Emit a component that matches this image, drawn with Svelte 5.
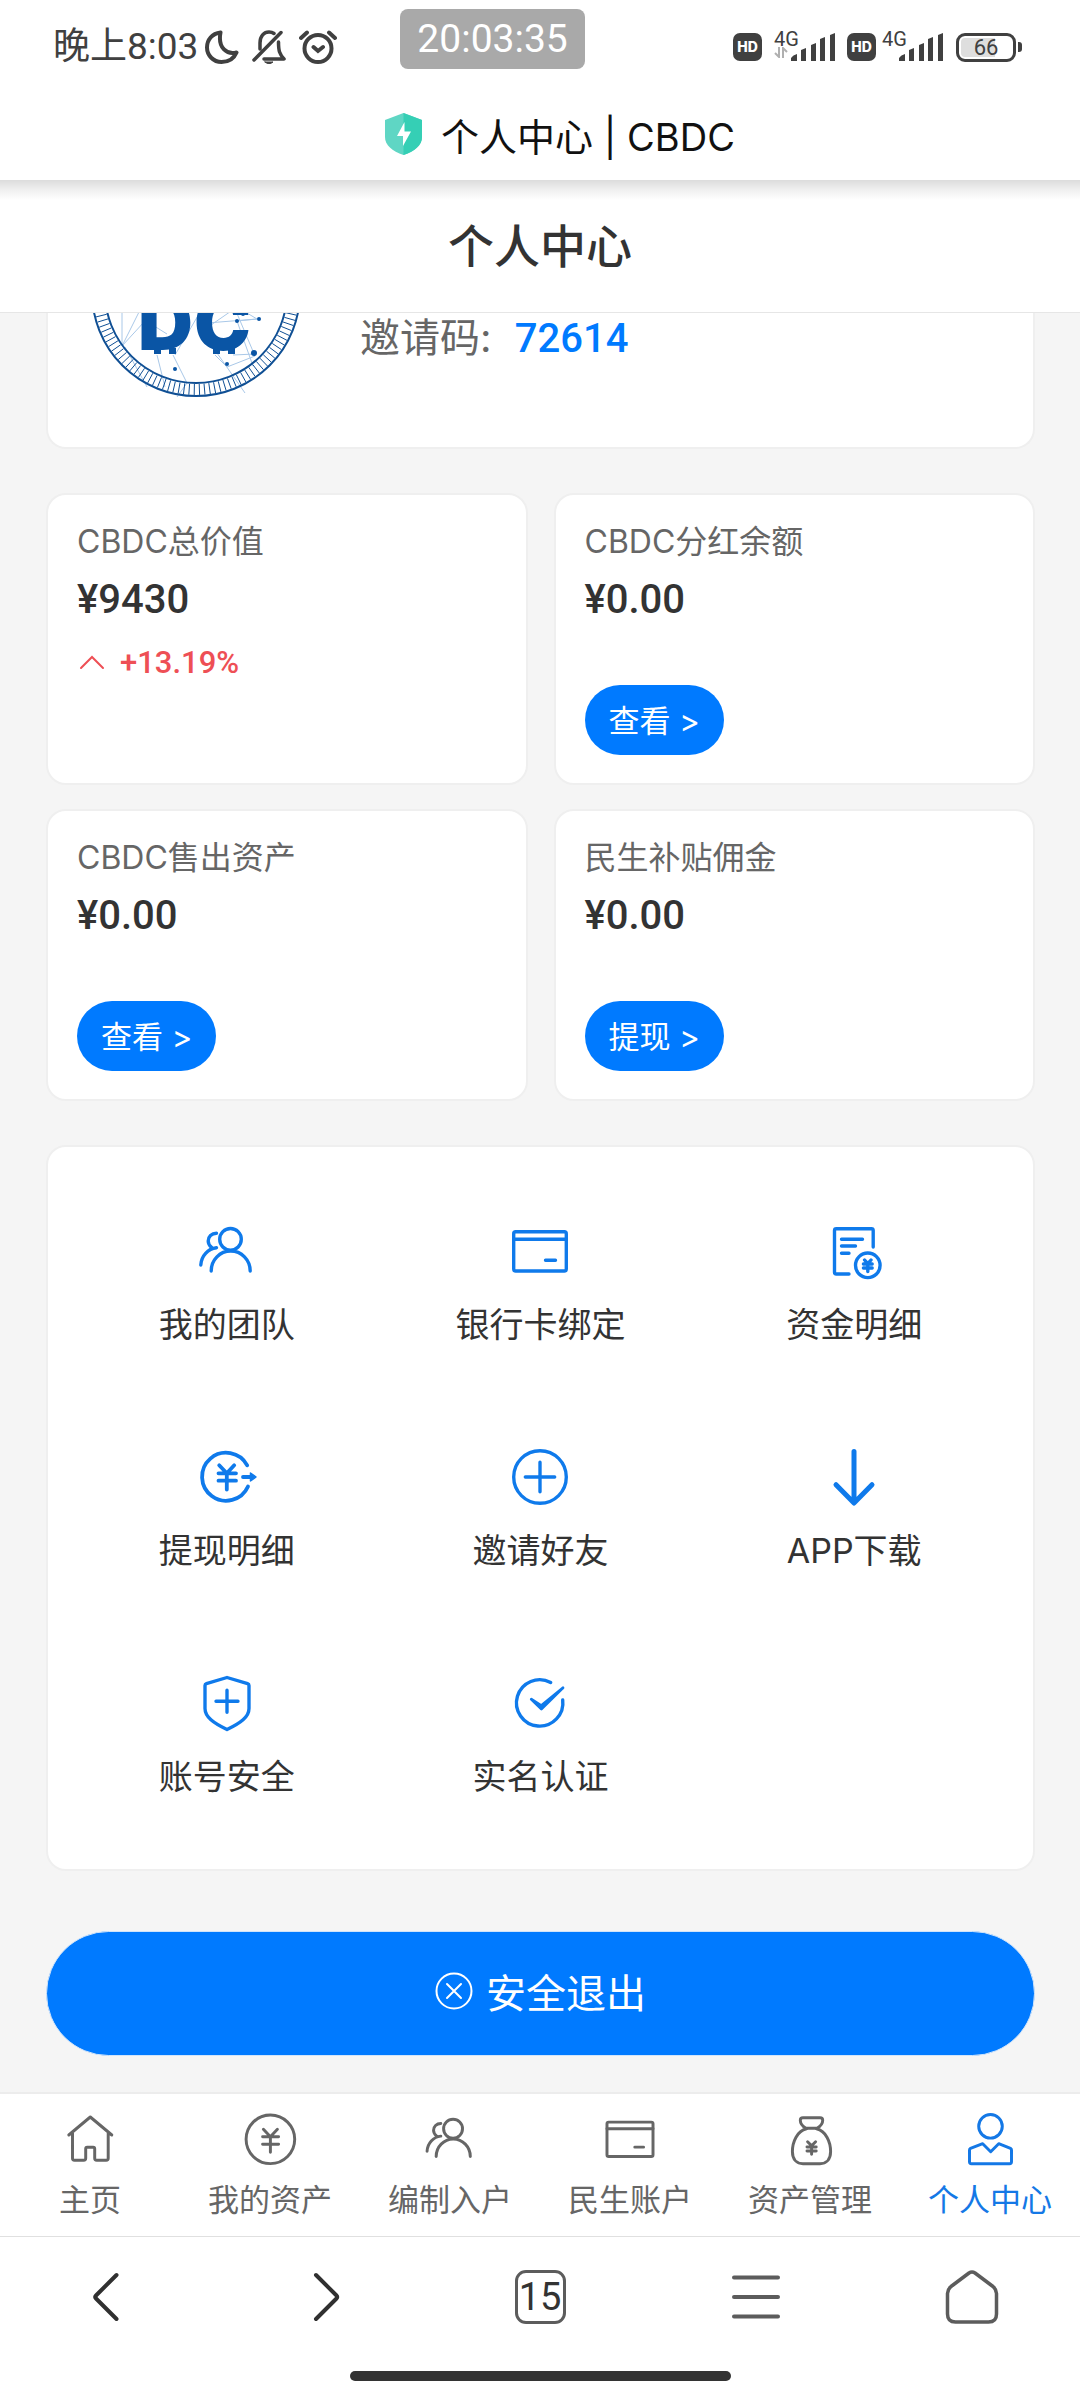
<script>
	const blue = '#0f7aeb';

	// every icon: viewBox size + inner markup, stroke comes from the parent svg
	const icons = {
		team: {
			box: 64,
			body: `<circle cx="35.5" cy="20.3" r="10.8"/><path d="M16.2 52a19.5 20 0 0 1 39 0M21.5 14.3c-5 0-8.3 3.5-8.3 7.7 0 3 1.2 4.6 3.3 6.4M21.5 28.7C13 29.5 6.2 37 5.8 46"/>`
		},
		card: {
			box: 64,
			body: `<rect x="5.7" y="12.7" width="52.6" height="39.3" rx="2"/><path d="M5.7 20.3h52.6M37.5 41.3h10"/>`
		},
		bill: {
			box: 64,
			body: `<path d="M51.2 28V11.5q0-1.8-1.8-1.8H14.3q-1.8 0-1.8 1.8v41.7q0 1.8 1.8 1.8H27M19.5 20.3h21M19.5 27h14M19.5 34.3h7.5"/><circle cx="45.8" cy="46.3" r="12.3"/><path d="M42.6 41l3.2 3.6 3.2-3.6M41.4 45h8.8M41.4 49h8.8M45.8 44.6v8"/>`
		},
		withdraw: {
			box: 64,
			body: `<g stroke-width="3.8"><path d="M52.2 20.3a24 24 0 1 0 .8 21.2M24.2 20.3l7.6 8 7.4-8M23.5 28.3h17.5M23.5 35.7h17.5M31.8 28.3v16.2M48 32h8"/></g><path d="M55.5 28v8l5.5-4z" fill="currentColor" stroke-width="1.5"/>`
		},
		plus: {
			box: 64,
			body: `<circle cx="32" cy="32" r="26.3"/><path d="M17.3 32h29.4M32 17.3v29.4"/>`
		},
		down: {
			box: 64,
			body: `<path d="M32 6.5v51M14 39.7L32 58l18-18.3" stroke-width="5"/>`
		},
		shield: {
			box: 64,
			body: `<path d="M32 6.5l20.6 6.2q1.4.4 1.4 1.8v23c0 8.5-8.5 14.5-22 21-13.5-6.5-22-12.5-22-21v-23q0-1.4 1.4-1.8zM21 30.300h22M32 19.300v22"/>`
		},
		check: {
			box: 64,
			body: `<path d="M42.7 11.5a23.2 23.2 0 1 0 12 17.5"/><path d="M23.3 28.2l10 6.4L55 16.8 33.4 38z" fill="currentColor" stroke-width="2.8"/>`
		},
		home: {
			box: 56,
			body: `<path d="M6.8 24L28.3 6l21.5 18M10.5 22v25.3q0 2 2 2h9.2q2 0 2-2v-9.5q0-1.5 1.5-1.5h6q1.5 0 1.5 1.5v9.5q0 2 2 2h9.5q2 0 2-2V22"/>`
		},
		yen: {
			box: 56,
			body: `<circle cx="28.4" cy="28.3" r="24.3"/><path d="M21.4 18.3l7 7.4 7-7.4M20.6 25.7h16M20.6 33.3h16M28.4 25.7v15.6"/>`
		},
		bag: {
			box: 56,
			body: `<path d="M24 17.3c-3.5-2-5.7-5-5.7-8q0-2.6 2.6-2.6h17.2q2.6 0 2.6 2.6c0 3-2.2 6-5.7 8z"/><path d="M24.500 17.8C15 20 10.4 31 10.4 40.5c0 8 4.4 12.2 10.6 12.2h17c6.2 0 10.6-4.2 10.6-12.2C48.6 31 44 20 34.5 17.8"/><path d="M25.6 30.8l4 4 4-4M25 36h9.2M25 40h9.2M29.6 35v8.3"/>`
		},
		user: {
			box: 56,
			body: `<circle cx="28.5" cy="15.3" r="11.8"/><path d="M20.7 32.7l8 8 8-8 11.8 4.7q1 .5 1 1.6v11.7q0 2-2 2h-38q-2 0-2-2V39q0-1.1 1-1.6z"/>`
		}
	};

	const assets = [
		{ name: 'CBDC总价值', value: '¥9430', rise: '+13.19%' },
		{ name: 'CBDC分红余额', value: '¥0.00', action: '查看 >' },
		{ name: 'CBDC售出资产', value: '¥0.00', action: '查看 >' },
		{ name: '民生补贴佣金', value: '¥0.00', action: '提现 >' }
	];

	const menu = [
		{ icon: 'team', text: '我的团队' },
		{ icon: 'card', text: '银行卡绑定' },
		{ icon: 'bill', text: '资金明细' },
		{ icon: 'withdraw', text: '提现明细' },
		{ icon: 'plus', text: '邀请好友' },
		{ icon: 'down', text: 'APP下载' },
		{ icon: 'shield', text: '账号安全' },
		{ icon: 'check', text: '实名认证' }
	];

	const tabs = [
		{ icon: 'home', text: '主页' },
		{ icon: 'yen', text: '我的资产' },
		{ icon: 'team', text: '编制入户' },
		{ icon: 'card', text: '民生账户' },
		{ icon: 'bag', text: '资产管理' },
		{ icon: 'user', text: '个人中心' }
	];

	let current = $state('user');

	// short spokes between the two rings of the coin
	const spokes = [];
	for (let a = -8; a <= 188; a += 3) {
		const r = (a * Math.PI) / 180;
		spokes.push(`M${105 + 92 * Math.cos(r)} ${105 + 92 * Math.sin(r)}L${105 + 103 * Math.cos(r)} ${105 + 103 * Math.sin(r)}`);
	}
</script>

{#snippet icon(name, size)}
	<svg
		width={size}
		height={size}
		viewBox="0 0 {icons[name].box} {icons[name].box}"
		fill="none"
		stroke="currentColor"
		stroke-width={icons[name].box / 19}
		stroke-linecap="round"
		stroke-linejoin="round"
		aria-hidden="true"
	>
		{@html icons[name].body}
	</svg>
{/snippet}

{#snippet signal()}
	<svg width="44" height="28" viewBox="0 0 44 28" fill="#404040" aria-hidden="true">
		<path d="M0 28v-3q2-3 6-4v7zM10 28V17l5-2v13zM20 28V12l5-2v18zM29 28V6l5-2v24zM39 28V2l5-2v28z" />
	</svg>
{/snippet}

<div class="page">
	<div class="status">
		<div class="status-left">
			<span class="clock">晚上8:03</span>
			<svg width="34" height="34" viewBox="0 0 34 34" fill="none" stroke="#404040" stroke-width="4" stroke-linejoin="round" aria-hidden="true">
				<path d="M15.5 2.5C7 3.5 2 10 2 17.5 2 25.5 8.5 32 16.5 32c7 0 12.5-3.5 15-9.5-9 2.5-19-4-16-20z" />
			</svg>
			<svg width="34" height="34" viewBox="0 0 34 34" fill="none" stroke="#404040" stroke-width="3.5" stroke-linecap="round" stroke-linejoin="round" aria-hidden="true">
				<path d="M2 30L29 2.5M8 19v-6C8 6 12 2 17 2q3 0 5 1.5M26.5 12c0 9 1 12 5.5 17H12" />
				<path d="M13 32h8q-4 3.5-8 0z" fill="#404040" stroke-width="1" />
			</svg>
			<svg width="38" height="34" viewBox="0 0 38 34" fill="none" stroke="#404040" stroke-width="4" stroke-linecap="round" aria-hidden="true">
				<circle cx="19" cy="18.5" r="13.5" />
				<path d="M2 8l6-5.500M36 8l-6-5.5M14.5 17l4.5 4 5-4" />
			</svg>
		</div>
		<div class="stamp">20:03:35</div>
		<div class="status-right">
			<span class="hd">HD</span>
			<span class="net">
				<span class="gen">4G</span>
				<svg width="14" height="11" viewBox="0 0 14 11" fill="none" stroke="#b0b0b0" stroke-width="2" aria-hidden="true"><path d="M5 0v10L1 6M9 11V1l4 4" /></svg>
			</span>
			{@render signal()}
			<span class="hd second">HD</span>
			<span class="net">
				<span class="gen">4G</span>
			</span>
			{@render signal()}
			<span class="battery">66</span>
			<span class="tip"></span>
		</div>
	</div>

	<div class="site">
		<svg width="37" height="42" viewBox="0 0 37 42" aria-hidden="true">
			<path d="M18.5 0L37 7v17c0 8-7 14-18.5 18C7 38 0 32 0 24V7z" fill="#5fd6c4" />
			<path d="M18.5 0L37 7v17c0 8-7 14-18.5 18z" fill="#35cfb5" />
			<path d="M19.5 9L12 23h6v10l8-14.5h-6.5z" fill="#fff" />
		</svg>
		<span>个人中心 | CBDC</span>
	</div>

	<header>
		<h1>个人中心</h1>
	</header>

	<main>
		<section class="card profile">
			<!-- lower part of the coin, the rest is scrolled under the header -->
			<svg width="210" height="84" viewBox="0 126 210 84" fill="none" aria-hidden="true">
				<g stroke="#a9c8e8" stroke-width="1">
					<path d="M31 122v37l34-37M31 159l25-50M76 147l-16-10M66 168l8 32M82 168l14 28-10 14M84 168l28-48M34 160l22 40M112 146l42 60M124 168l12 12 28-11-22-52M146 134l20-2-50 4M146 134l16 45M166 132l-20-12-26 18M142 168l22-1" />
				</g>
				<g fill="#0a55a5">
					<circle cx="84" cy="182" r="2" />
					<circle cx="146" cy="134" r="2" />
					<circle cx="168" cy="132" r="2" />
					<circle cx="152" cy="127" r="2" />
					<circle cx="163" cy="166" r="3" />
					<circle cx="136" cy="177" r="2" />
					<text class="coin" x="47" y="163">D</text>
					<text class="coin" x="103" y="163">C</text>
					<path d="M63 161h7v6h-7zM78 161h7v6h-7zM122 161h7v6h-7zM137 161h7v6h-7z" />
				</g>
				<g stroke="#0f4f94">
					<circle cx="105" cy="105" r="104" stroke-width="2" />
					<circle cx="105" cy="105" r="91" stroke-width="2" />
					<path d={spokes.join('')} stroke-width="1" />
				</g>
			</svg>
			<p>邀请码: <b>72614</b></p>
		</section>

		<section class="assets">
			{#each assets as item}
				<article class="card asset">
					<h2>{item.name}</h2>
					<strong>{item.value}</strong>
					{#if item.rise}
						<div class="rise">
							<svg width="30" height="20" viewBox="0 0 30 20" fill="none" stroke="currentColor" stroke-width="2" stroke-linecap="round" aria-hidden="true"><path d="M4 15L15 4l11 11" /></svg>
							<span>{item.rise}</span>
						</div>
					{/if}
					{#if item.action}
						<button class="pill">{item.action}</button>
					{/if}
				</article>
			{/each}
		</section>

		<section class="card menu">
			{#each menu as item}
				<button class="entry">
					<span class="entry-icon" style:color={blue}>{@render icon(item.icon, 64)}</span>
					<span>{item.text}</span>
				</button>
			{/each}
		</section>

		<button class="logout">
			<svg width="38" height="38" viewBox="0 0 38 38" fill="none" stroke="currentColor" stroke-width="2" stroke-linecap="round" aria-hidden="true">
				<circle cx="19" cy="19" r="17.5" />
				<path d="M12 12l14 14M26 12L12 26" />
			</svg>
			<span>安全退出</span>
		</button>
	</main>

	<nav class="tabs">
		{#each tabs as tab}
			<button class="tab" class:active={current === tab.icon} onclick={() => (current = tab.icon)}>
				{@render icon(tab.icon, 56)}
				<span>{tab.text}</span>
			</button>
		{/each}
	</nav>

	<footer>
		<div class="browser">
			<button aria-label="后退">
				<svg width="56" height="56" viewBox="0 0 56 56" fill="none" stroke="#303030" stroke-width="4" stroke-linecap="round" stroke-linejoin="round"><path d="M36.5 6L16 26.5q-1.5 1.5 0 3L36.5 50" /></svg>
			</button>
			<button aria-label="前进">
				<svg width="56" height="56" viewBox="0 0 56 56" fill="none" stroke="#303030" stroke-width="4" stroke-linecap="round" stroke-linejoin="round"><path d="M20 6l20.5 20.5q1.5 1.5 0 3L20 50" /></svg>
			</button>
			<button><span class="count">15</span></button>
			<button aria-label="菜单">
				<svg width="56" height="56" viewBox="0 0 56 56" fill="none" stroke="#5c5c5c" stroke-width="4" stroke-linecap="round"><path d="M6 8.5h44M6 28h44M6 47.500h44" /></svg>
			</button>
			<button aria-label="首页">
				<svg width="56" height="56" viewBox="0 0 56 56" fill="none" stroke="#5c5c5c" stroke-width="3.5" stroke-linejoin="round"><path d="M25 4q3-2 6 0l18 13.500q3.500 3 3.500 7V45q0 8-8 8h-33q-8 0-8-8V24.500q0-4 3.500-7z" /></svg>
			</button>
		</div>
		<div class="bar"></div>
	</footer>
</div>

<style>
	:global(body) {
		margin: 0;
		background: #f5f5f5;
	}

	* {
		box-sizing: border-box;
	}

	h1, h2, p {
		margin: 0;
	}

	button {
		padding: 0;
		border: 0;
		background: none;
		color: inherit;
		font: inherit;
		cursor: pointer;
	}

	svg {
		display: block;
		flex: none;
	}

	.page {
		font-family: Inter, "Noto Sans CJK SC", sans-serif;
		color: #333;
	}

	/* phone status bar */
	.status {
		display: flex;
		height: 88px;
		padding: 0 58px 0 53px;
		background: #fff;
		color: #404040;
	}

	.status-left, .status-right {
		display: flex;
		align-items: center;
		height: 94px;
	}

	.status-left {
		gap: 13px;
	}

	.clock {
		margin-right: -6px;
		font: 37px/44px Roboto, "Noto Sans CJK SC", sans-serif;
		white-space: nowrap;
	}

	.stamp {
		height: 60px;
		margin: 9px auto 0 63px;
		padding: 0 17px;
		border-radius: 8px;
		background: #a9a9a9;
		color: #fff;
		font: 39px/60px Roboto, sans-serif;
	}

	.hd {
		width: 29px;
		height: 28px;
		margin-right: 12px;
		border-radius: 7px;
		background: #404040;
		color: #fff;
		font-size: 14px;
		font-weight: 800;
		line-height: 28px;
		text-align: center;
	}

	.hd.second {
		margin-left: 12px;
		margin-right: 6px;
	}

	.net {
		display: flex;
		flex-direction: column;
		width: 27px;
		height: 32px;
		margin-right: -10px;
	}

	.gen {
		font: 20px/16px Roboto, sans-serif;
	}

	.battery {
		width: 60px;
		height: 29px;
		margin-left: 13px;
		border: 3px solid #404040;
		border-radius: 9px;
		background: linear-gradient(90deg, #dedede 66%, #fff 66%);
		box-shadow: inset 0 0 0 2px #fff;
		font: 22px/23px Roboto, sans-serif;
		text-align: center;
	}

	.tip {
		width: 4px;
		height: 10px;
		margin-left: 2px;
		border-radius: 0 3px 3px 0;
		background: #404040;
	}

	.site {
		display: flex;
		justify-content: center;
		align-items: center;
		gap: 19px;
		height: 92px;
		padding-left: 40px;
		background: #fff;
		color: #111;
		font-size: 38px;
	}

	header {
		display: flex;
		justify-content: center;
		align-items: center;
		height: 133px;
		border-bottom: 1px solid #e6e6e6;
		background: linear-gradient(#dcdcdc, #f0f0f0 10px, #fff 20px);
	}

	h1 {
		font-size: 46px;
		font-weight: 500;
		line-height: 64px;
	}

	main {
		padding: 0 45px 36px 46px;
	}

	.card {
		border: 2px solid #efefef;
		border-radius: 20px;
		background: #fff;
	}

	.profile {
		display: flex;
		align-items: flex-start;
		gap: 59px;
		padding: 0 43px 50px;
		border-top: 0;
		border-radius: 0 0 20px 20px;
	}

	.profile p {
		color: #666;
		font-size: 40px;
		line-height: 50px;
	}

	.profile b {
		margin-left: 12px;
		color: #007aff;
		font-family: Roboto, sans-serif;
		font-weight: 500;
	}

	.coin {
		font: 900 76px Inter, sans-serif;
	}

	.assets {
		display: grid;
		grid-template-columns: 1fr 1fr;
		gap: 24px 26px;
		margin: 44px 0;
	}

	.asset {
		display: flex;
		flex-direction: column;
		align-items: flex-start;
		min-height: 292px;
		padding: 25px 29px 28px;
	}

	h2 {
		color: #666;
		font-size: 32px;
		font-weight: 400;
		line-height: 44px;
	}

	.asset strong {
		margin-top: 8px;
		font: 500 40px/56px Roboto, sans-serif;
	}

	.rise {
		display: flex;
		align-items: center;
		gap: 13px;
		margin-top: 13px;
		color: #ee4f55;
		font: 500 31px/44px Roboto, sans-serif;
	}

	.pill {
		height: 70px;
		margin-top: auto;
		padding: 0 24px 4px;
		border-radius: 35px;
		background: #007aff;
		color: #fff;
		font-size: 31px;
	}

	.menu {
		display: grid;
		grid-template-columns: repeat(3, 1fr);
		grid-auto-rows: 226px;
		padding: 22px;
	}

	.entry {
		display: flex;
		flex-direction: column;
		align-items: center;
		gap: 18px;
		padding-top: 50px;
		font-size: 34px;
		line-height: 48px;
	}

	.logout {
		display: flex;
		justify-content: center;
		align-items: center;
		gap: 13px;
		width: 100%;
		height: 125px;
		margin-top: 60px;
		padding-bottom: 6px;
		border: 1px solid #cfe4fb;
		border-radius: 63px;
		background: #007aff;
		color: #fff;
		font-size: 40px;
	}

	.tabs {
		display: grid;
		grid-template-columns: repeat(6, 1fr);
		height: 144px;
		border-top: 2px solid #ececec;
		background: #fff;
	}

	.tab {
		display: flex;
		flex-direction: column;
		align-items: center;
		gap: 13px;
		padding-top: 17px;
		color: #666;
		font-size: 31px;
		line-height: 40px;
		white-space: nowrap;
	}

	.tab.active {
		color: #1478e6;
	}

	footer {
		height: 164px;
		border-top: 1px solid #e0e0e0;
		background: #fff;
	}

	.browser {
		display: grid;
		grid-template-columns: repeat(5, 1fr);
		justify-items: center;
		align-items: center;
		height: 119px;
	}

	.count {
		display: block;
		width: 51px;
		height: 54px;
		border: 3px solid #5c5c5c;
		border-radius: 11px;
		font: 38px/48px Roboto, sans-serif;
		text-align: center;
	}

	.bar {
		width: 381px;
		height: 10px;
		margin: 15px auto 0;
		border-radius: 5px;
		background: #333;
	}
</style>
